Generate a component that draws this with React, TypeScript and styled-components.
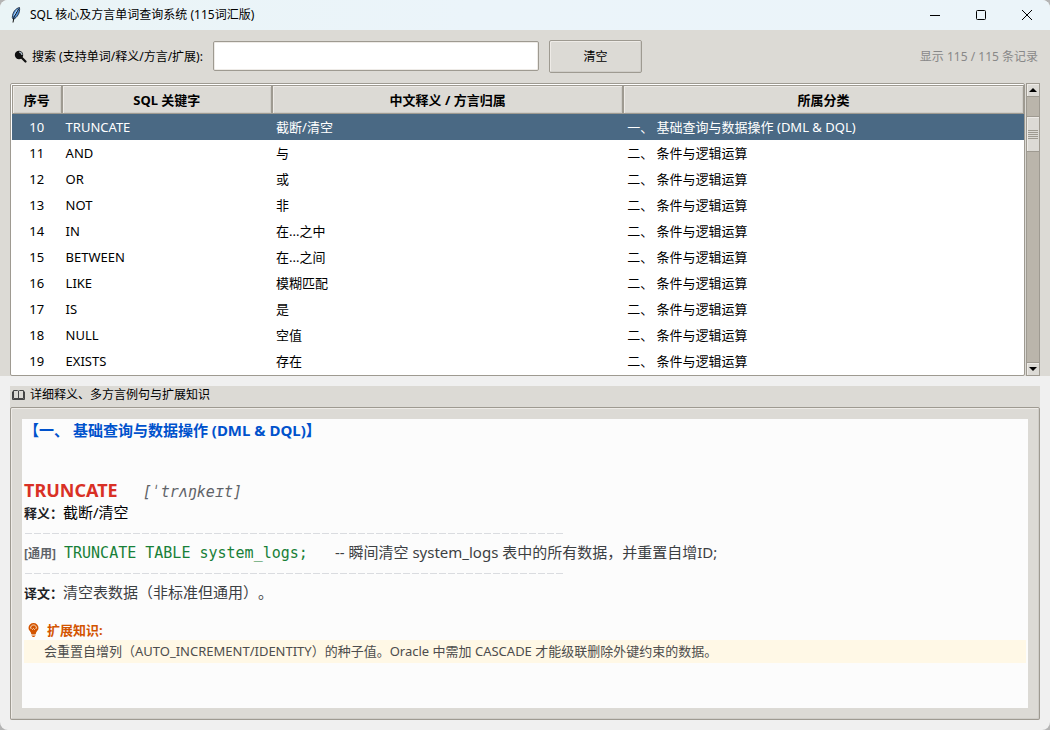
import React, { useState } from "react";
import styled, { createGlobalStyle, css } from "styled-components";

const clam = {
  face: "#dcdad5",
  border: "#9e9a91",
  light: "#eeebe7",
  dark: "#cfcdc8",
  trough: "#bab5ab",
  select: "#4a6984",
  window: "#f0f0f0",
  text: "#fcfcfc",
};

const Global = createGlobalStyle`
  *, *::before, *::after { box-sizing: border-box; }
  html, body, #root { height: 100%; }
  body {
    margin: 0;
    background: #b4b4b4;
    color: #000;
    font: 13px/20px "Noto Sans", "Noto Sans CJK SC", sans-serif;
    text-spacing-trim: space-all;
  }
`;

const Window = styled.div`
  display: flex;
  flex-direction: column;
  min-height: 100%;
  overflow: hidden;
  border-radius: 8px;
  background: ${clam.window};
`;

const TitleBar = styled.header`
  display: flex;
  align-items: center;
  height: 30px;
  padding-left: 8px;
  background: linear-gradient(90deg, #eaf4f6, #ebf4fa 45%, #ebf4f9);
`;

const Title = styled.h1`
  flex: 1;
  margin: 0 0 0 6px;
  font-size: 12px;
  font-weight: 400;
`;

const WindowButton = styled.button`
  display: grid;
  place-items: center;
  width: 46px;
  height: 28px;
  padding: 0;
  border: 0;
  background: none;
`;

const QueryPane = styled.section`
  padding: 10px 10px 0;
  background: ${clam.face};
`;

const SearchRow = styled.div`
  display: flex;
  align-items: center;
  height: 33px;
  margin-bottom: 10px;
  padding: 0 2px 0 4px;
`;

const SearchLabel = styled.label`
  display: flex;
  align-items: center;
  gap: 5px;
  width: 199px;
  font-size: 12px;
  white-space: nowrap;
`;

const SearchInput = styled.input`
  width: 326px;
  height: 30px;
  margin-bottom: 1px;
  padding: 0 6px;
  border: 1px solid ${clam.border};
  border-radius: 2px;
  outline: none;
  background: #fff;
  box-shadow: inset 0 0 0 1px ${clam.light};
  font: inherit;
`;

const ClearButton = styled.button`
  width: 93px;
  height: 33px;
  margin-left: 10px;
  border: 1px solid ${clam.border};
  border-radius: 2px;
  background: ${clam.face};
  box-shadow: inset 1px 1px ${clam.light}, inset -1px -1px ${clam.dark};
  color: #000;
  font: inherit;
  font-size: 12px;
`;

const Count = styled.output`
  margin-left: auto;
  color: #888;
  font-size: 12px;
`;

const Listing = styled.div`
  display: flex;
  height: 293px;
`;

const TableFrame = styled.div`
  flex: 1;
  overflow: hidden;
  padding: 1px 0 0 1px;
  border: 1px solid ${clam.border};
  border-radius: 2px;
  background: #fff;
`;

const Table = styled.table`
  width: 100%;
  table-layout: fixed;
  border-collapse: separate;
  border-spacing: 0;
`;

const Heading = styled.th`
  height: 29px;
  padding: 0;
  border: 1px solid ${clam.border};
  background: ${clam.face};
  box-shadow: inset 1px 1px ${clam.light}, inset -1px -1px ${clam.dark};
  font-weight: 700;
`;

const Row = styled.tr<{ $selected: boolean }>`
  height: 26px;
  ${(p) =>
    p.$selected &&
    css`
      background: ${clam.select};
      color: #fff;
    `}
`;

const Cell = styled.td<{ $center?: boolean }>`
  padding: 0 4px;
  text-align: ${(p) => (p.$center ? "center" : "left")};
  white-space: pre;
`;

const ScrollBar = styled.div`
  display: flex;
  flex-direction: column;
  width: 14px;
  margin-left: 1px;
  border: 1px solid ${clam.border};
  background: ${clam.trough};
`;

const ScrollArrow = styled.button`
  display: grid;
  place-items: center;
  height: 13px;
  padding: 0;
  border: 0 solid ${clam.border};
  border-width: ${(p) => (p["aria-label"] === "向上滚动" ? "0 0 1px" : "1px 0 0")};
  background: ${clam.face};
  box-shadow: inset 1px 1px ${clam.light};
`;

const ScrollTrack = styled.div`
  flex: 1;
  padding-top: 19px;
`;

const ScrollThumb = styled.div`
  display: grid;
  place-items: center;
  height: 36px;
  border: 1px solid ${clam.border};
  border-width: 1px 0;
  background: ${clam.face};
  box-shadow: inset 1px 1px ${clam.light};
`;

const DetailPane = styled.section`
  display: flex;
  flex: 1;
  flex-direction: column;
  margin: 10px;
  background: ${clam.face};
`;

const DetailTitle = styled.h2`
  display: flex;
  align-items: center;
  gap: 5px;
  height: 21px;
  margin: 0;
  padding: 0 2px 3px;
  font-size: 12px;
  font-weight: 400;
`;

const DetailFrame = styled.div`
  display: flex;
  flex: 1;
  padding: 11px;
  border: 1px solid ${clam.border};
  border-radius: 2px;
  box-shadow: inset 1px 1px ${clam.light}, inset -1px -1px ${clam.dark};
`;

const Article = styled.article`
  flex: 1;
  padding: 1px 2px;
  background: ${clam.text};
  color: #3c4043;
  font-size: 15px;
`;

const Category = styled.h3`
  height: 20px;
  margin: 0 0 38px;
  color: #0052cc;
  font-size: 15px;
  font-weight: 700;
  line-height: 20px;
  white-space: pre;
`;

const WordLine = styled.div`
  display: flex;
  align-items: baseline;
  gap: 25px;
  height: 24px;
  line-height: 24px;
`;

const Word = styled.strong`
  color: #d93025;
  font-size: 18px;
`;

const Phonetic = styled.i`
  color: #5f6368;
  font-family: "DejaVu Sans Mono", monospace;
  font-size: 15px;
`;

const Line = styled.p`
  height: 20px;
  margin: 0;
  line-height: 20px;
  white-space: pre;
`;

const Meaning = styled.span`
  color: #000;
`;

const Caption = styled.b`
  color: #202124;
  font-size: 13px;
`;

const Rule = styled.hr`
  width: 540px;
  max-width: 100%;
  height: 20px;
  margin: 0;
  border: 0;
  background: repeating-linear-gradient(90deg, transparent 0 1px, #dadce0 1px 8px, transparent 8px 9px) 0 11px / 100% 1px no-repeat;
`;

const Dialect = styled.b`
  display: inline-block;
  width: 40px;
  color: #5f6368;
  font-size: 12px;
  font-weight: 700;
`;

const Code = styled.code`
  color: #188038;
  font-family: "DejaVu Sans Mono", monospace;
  font-size: 15px;
`;

const TipTitle = styled.h4`
  display: flex;
  align-items: center;
  gap: 8px;
  height: 20px;
  margin: 18px 0 0;
  padding-left: 4px;
  color: #d35400;
  font-size: 13px;
  font-weight: 700;
`;

const Tip = styled.p`
  margin: 0;
  padding-left: 20px;
  background: #fff8e6;
  color: #4d4d4d;
  font-size: 13px;
  line-height: 23px;
`;

const entries = [
  [10, "TRUNCATE", "截断/清空", "一、 基础查询与数据操作 (DML & DQL)"],
  [11, "AND", "与", "二、 条件与逻辑运算"],
  [12, "OR", "或", "二、 条件与逻辑运算"],
  [13, "NOT", "非", "二、 条件与逻辑运算"],
  [14, "IN", "在...之中", "二、 条件与逻辑运算"],
  [15, "BETWEEN", "在...之间", "二、 条件与逻辑运算"],
  [16, "LIKE", "模糊匹配", "二、 条件与逻辑运算"],
  [17, "IS", "是", "二、 条件与逻辑运算"],
  [18, "NULL", "空值", "二、 条件与逻辑运算"],
  [19, "EXISTS", "存在", "二、 条件与逻辑运算"],
] as const;

const Feather = () => (
  <svg width="16" height="18" viewBox="0 0 16 18" aria-hidden="true">
    <path d="M11.5 1.5C7.5 2.5 4.6 6 4.3 11.5l1 2C9 11.5 12.3 7 11.5 1.5Z" fill="#4f8fd6" stroke="#111827" strokeWidth=".8" />
    <path d="M10.5 3 6 11 5 16.500" fill="none" stroke="#111" strokeWidth="1" />
    <path d="M9.300 3.500 5.800 9.500" stroke="#b9dcff" strokeWidth="1" />
  </svg>
);

const Magnifier = () => (
  <svg width="13" height="13" viewBox="0 0 13 13" aria-hidden="true">
    <circle cx="5" cy="5" r="4.200" fill="#111" />
    <path d="m8 8 3.500 3.500" stroke="#111" strokeWidth="2.200" strokeLinecap="round" />
    <path d="M5.200 2.200A3 3 0 0 1 8 5" fill="none" stroke="#a8b8c4" strokeWidth="1.200" />
  </svg>
);

const Book = () => (
  <svg width="13" height="12" viewBox="0 0 13 12" aria-hidden="true">
    <path d="M1.500 1.500h4l1 .5 1-.5h4v8h-10zM6.500 2v8" fill="none" stroke="#444" />
    <path d="M.5 2.500v8h12v-8" fill="none" stroke="#444" />
  </svg>
);

const Bulb = () => (
  <svg width="11" height="14" viewBox="0 0 11 14" aria-hidden="true">
    <path d="M5.500 0a5 5 0 0 0-5 5c0 2.200 1.800 3 2.600 5V11h4.800v-1c.8-2 2.600-2.800 2.600-5a5 5 0 0 0-5-5Z" fill="#d35400" />
    <path d="M3.500 12h4M4.300 13.500h2.400" stroke="#d35400" />
    <path d="M2.500 5.500C2.500 3 4 2 5.500 2s3 1 3 3.500M3.500 5.500l1 1 1-1 1 1 1-1" fill="none" stroke="#fbe6d4" strokeWidth=".9" />
  </svg>
);

export default function App() {
  const [query, setQuery] = useState("");
  const [selected, setSelected] = useState(10);

  return (
    <>
      <Global />
      <Window>
        <TitleBar>
          <Feather />
          <Title>SQL 核心及方言单词查询系统 (115词汇版)</Title>
          <WindowButton aria-label="最小化">
            <svg width="10" height="10"><path d="M0 5.500h10" stroke="#000" /></svg>
          </WindowButton>
          <WindowButton aria-label="最大化">
            <svg width="10" height="10"><rect x=".5" y=".5" width="9" height="9" rx="1" fill="none" stroke="#000" /></svg>
          </WindowButton>
          <WindowButton aria-label="关闭">
            <svg width="10" height="10"><path d="m0 0 10 10m0-10L0 10" stroke="#000" /></svg>
          </WindowButton>
        </TitleBar>

        <QueryPane>
          <SearchRow>
            <SearchLabel htmlFor="query">
              <Magnifier />
              搜索 (支持单词/释义/方言/扩展):
            </SearchLabel>
            <SearchInput id="query" value={query} onChange={(e) => setQuery(e.target.value)} />
            <ClearButton onClick={() => setQuery("")}>清空</ClearButton>
            <Count>显示 115 / 115 条记录</Count>
          </SearchRow>
          <Listing>
            <TableFrame>
              <Table>
                <colgroup>
                  <col style={{ width: "4.9%" }} />
                  <col style={{ width: "20.8%" }} />
                  <col style={{ width: "34.7%" }} />
                  <col />
                </colgroup>
                <thead>
                  <tr>
                    <Heading>序号</Heading>
                    <Heading>SQL 关键字</Heading>
                    <Heading>中文释义 / 方言归属</Heading>
                    <Heading>所属分类</Heading>
                  </tr>
                </thead>
                <tbody>
                  {entries.map(([id, word, meaning, category]) => (
                    <Row key={id} $selected={id === selected} onClick={() => setSelected(id)}>
                      <Cell $center>{id}</Cell>
                      <Cell>{word}</Cell>
                      <Cell>{meaning}</Cell>
                      <Cell>{category}</Cell>
                    </Row>
                  ))}
                </tbody>
              </Table>
            </TableFrame>
            <ScrollBar>
              <ScrollArrow aria-label="向上滚动">
                <svg width="8" height="4"><path d="M0 4 4 0l4 4z" /></svg>
              </ScrollArrow>
              <ScrollTrack>
                <ScrollThumb>
                  <svg width="10" height="9"><path d="M0 .5h10M0 2.500h10M0 4.500h10M0 6.500h10M0 8.500h10" stroke={clam.border} /></svg>
                </ScrollThumb>
              </ScrollTrack>
              <ScrollArrow aria-label="向下滚动">
                <svg width="8" height="4"><path d="m0 0 4 4 4-4z" /></svg>
              </ScrollArrow>
            </ScrollBar>
          </Listing>
        </QueryPane>

        <DetailPane>
          <DetailTitle>
            <Book />
            详细释义、多方言例句与扩展知识
          </DetailTitle>
          <DetailFrame>
            <Article>
              <Category>【一、 基础查询与数据操作 (DML & DQL)】</Category>
              <WordLine>
                <Word>TRUNCATE</Word>
                <Phonetic>[ˈtrʌŋkeɪt]</Phonetic>
              </WordLine>
              <Line><Caption>释义：</Caption><Meaning>截断/清空</Meaning></Line>
              <Rule />
              <Line><Dialect>[通用]</Dialect><Code>{"TRUNCATE TABLE system_logs;   "}</Code>-- 瞬间清空 system_logs 表中的所有数据，并重置自增ID;</Line>
              <Rule />
              <Line><Caption>译文：</Caption>清空表数据（非标准但通用）。</Line>
              <TipTitle><Bulb />扩展知识:</TipTitle>
              <Tip>会重置自增列（AUTO_INCREMENT/IDENTITY）的种子值。Oracle 中需加 CASCADE 才能级联删除外键约束的数据。</Tip>
            </Article>
          </DetailFrame>
        </DetailPane>
      </Window>
    </>
  );
}
